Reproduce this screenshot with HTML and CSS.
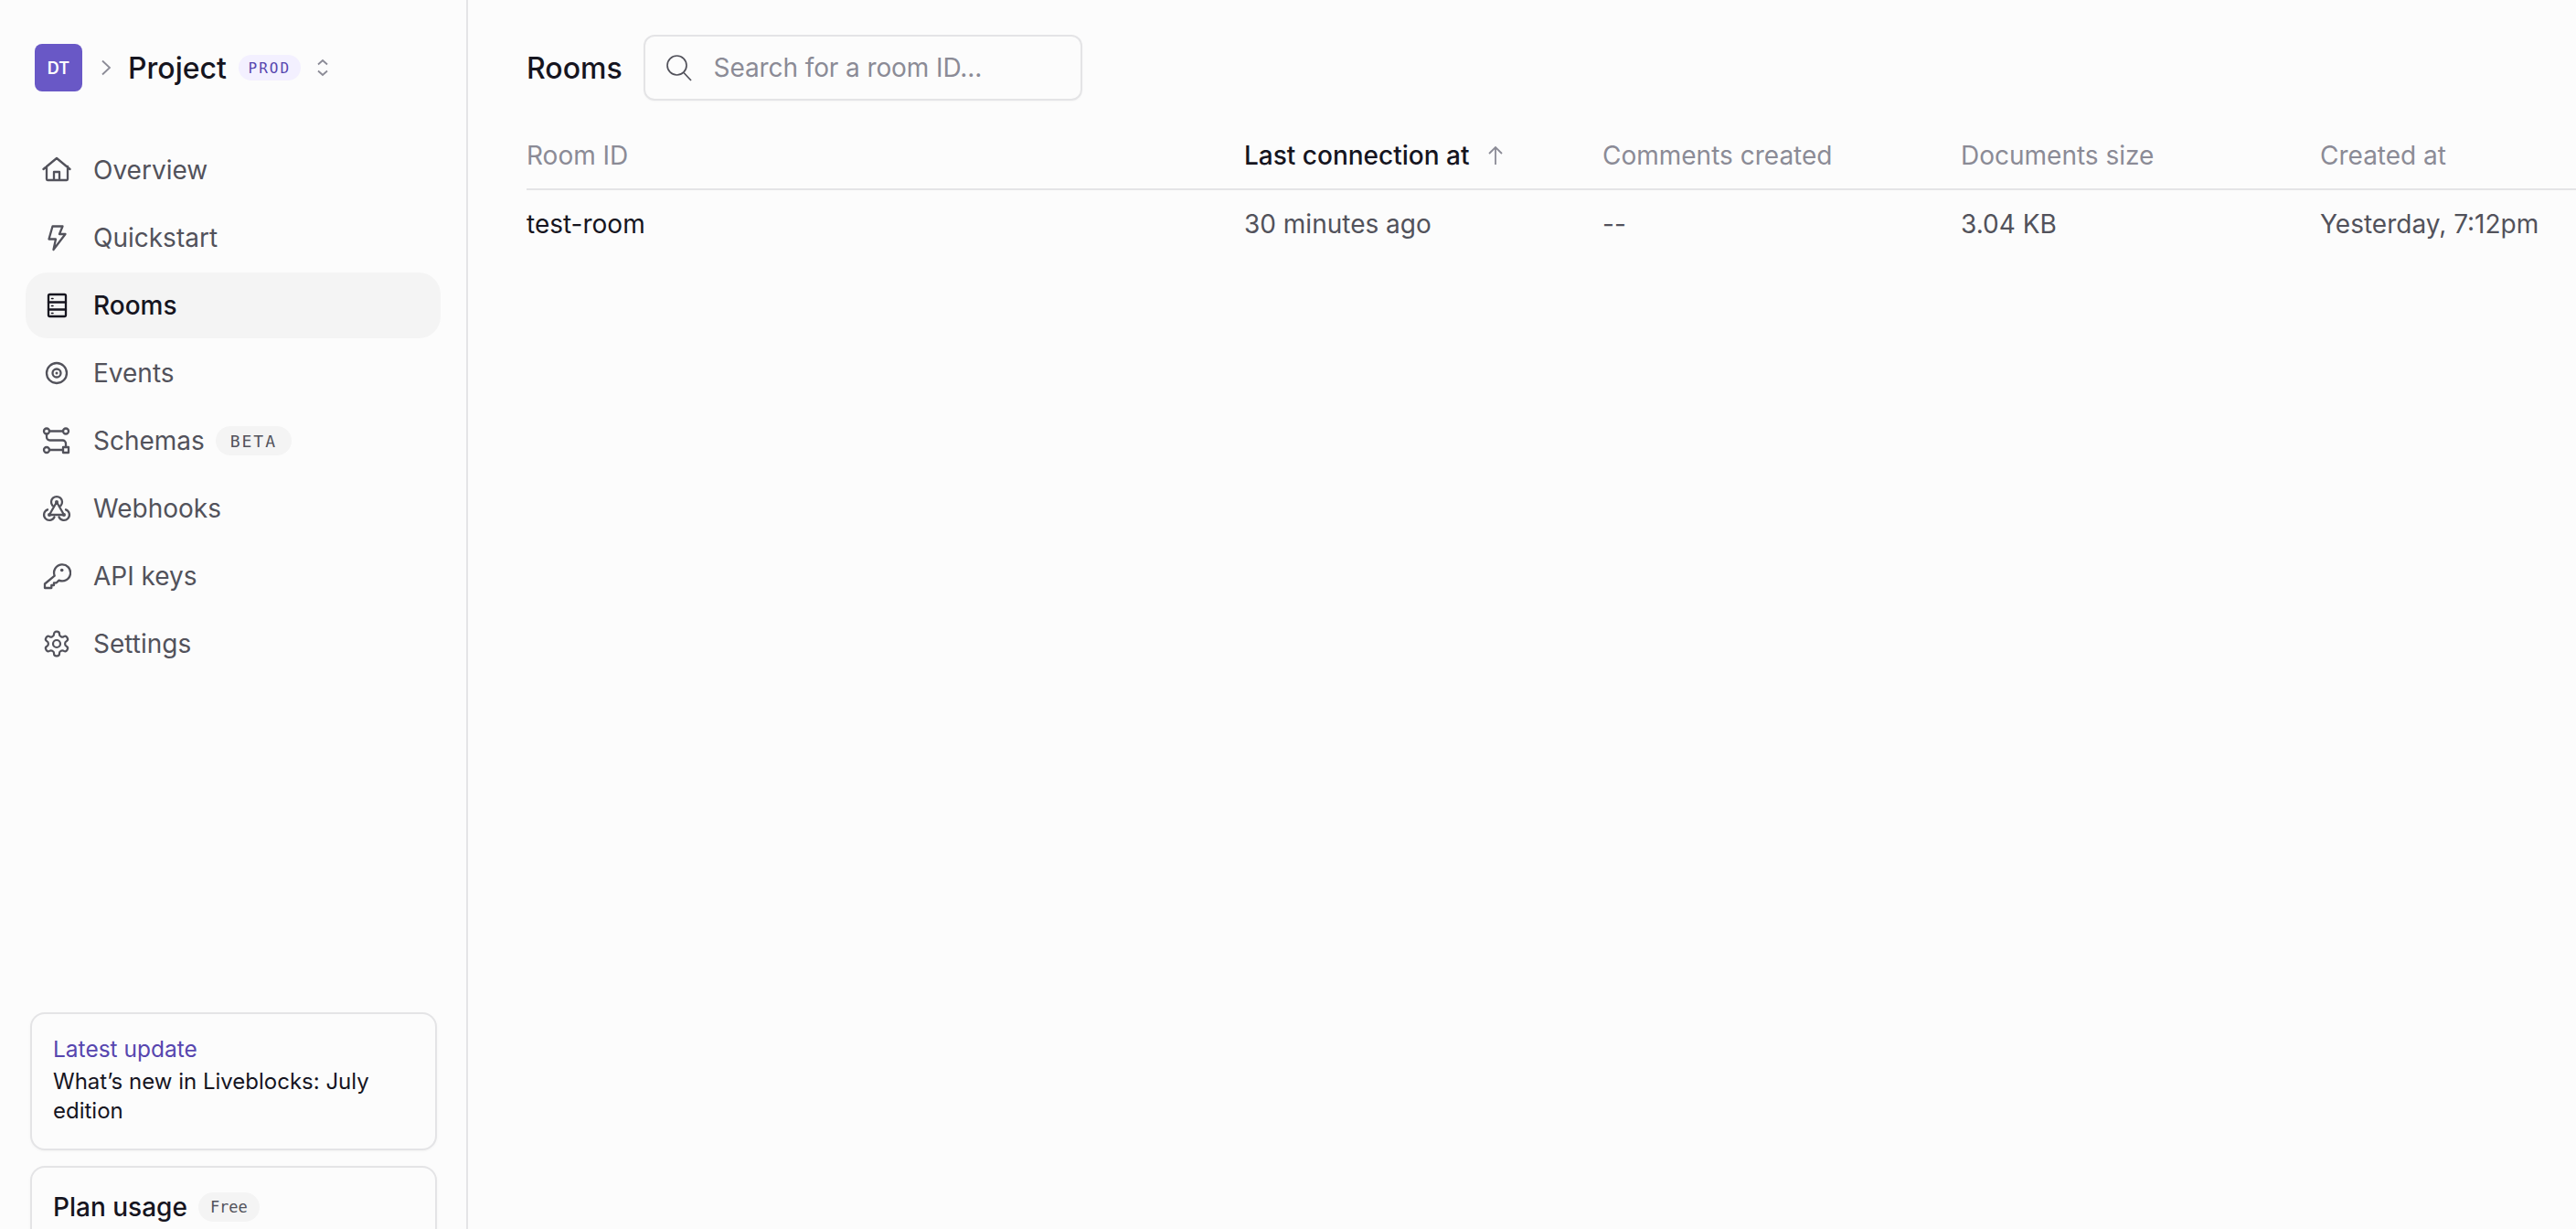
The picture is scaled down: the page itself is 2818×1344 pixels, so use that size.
FILE: index.html
```html
<!DOCTYPE html>
<html lang="en">
<head>
<meta charset="utf-8">
<title>Rooms</title>
<link rel="stylesheet" href="styles.css">
</head>
<body>
<div class="app">
  <aside class="sidebar">
    <div class="project">
      <div class="avatar">DT</div>
      <svg class="chev" viewBox="0 0 12 20"><path d="M2 2.500 10 10 2 17.500"/></svg>
      <span class="project-name">Project</span>
      <span class="pill pill-prod">PROD</span>
      <svg class="updown" viewBox="0 0 14 20"><path d="M2 6.500 7 2l5 4.500M2 13.500 7 18l5-4.500"/></svg>
    </div>
    <nav class="nav">
      <a class="nav-item"><svg class="icon" viewBox="0 0 32 32"><path d="M1.500 15 16 3l14.500 12M5 12v14a1 1 0 0 0 1 1h21a1 1 0 0 0 1-1V12M13 27v-9h6v9"/></svg><span>Overview</span></a>
      <a class="nav-item"><svg class="icon" viewBox="0 0 32 32"><path d="M11.500 3.500h11L19 12h6.500l-13 17L15 17.500H7.500z"/></svg><span>Quickstart</span></a>
      <a class="nav-item is-active"><svg class="icon" viewBox="0 0 32 32"><rect x="7" y="4" width="19" height="24" rx="1.500"/><path d="M7 12.500h19M7 20.500h19"/><path class="dots" d="M10.500 8.500h1.500M10.500 16.500h1.500M10.500 24.500h1.500"/></svg><span>Rooms</span></a>
      <a class="nav-item"><svg class="icon" viewBox="0 0 32 32"><circle cx="16" cy="16" r="11"/><circle cx="16" cy="16" r="4.500"/><circle class="fill" cx="16" cy="16" r="1.500"/></svg><span>Events</span></a>
      <a class="nav-item"><svg class="icon" viewBox="0 0 32 32"><circle cx="5" cy="5.500" r="3"/><circle cx="26" cy="5.500" r="3"/><circle cx="5" cy="26" r="3"/><rect x="23" y="23" width="6" height="6"/><path d="M8 5.500h15M5 8.500V12a3.500 3.500 0 0 0 3.500 3.500h14a3.500 3.500 0 0 1 3.500 3.500v4M8 26h15"/></svg><span>Schemas</span><span class="pill pill-beta">BETA</span></a>
      <a class="nav-item"><svg class="icon" viewBox="0 0 32 32"><path d="M11.500 13A6 6 0 1 1 20.500 13M6 17.300A6 6 0 1 0 13.500 25.500M18.500 25.500A6 6 0 1 0 26 17.300M16 9 8 23H24Z"/><circle class="fill" cx="16" cy="9" r="2"/><circle class="fill" cx="8" cy="23" r="2"/><circle class="fill" cx="24" cy="23" r="2"/></svg><span>Webhooks</span></a>
      <a class="nav-item"><svg class="icon" viewBox="0 0 32 32"><path d="M13.700 15.600A9 9 0 1 1 18.500 20.600L15.800 23.300H13V26H10.300V29H3V24.500z"/><circle class="fill" cx="21.700" cy="9.500" r="1.800"/></svg><span>API keys</span></a>
      <a class="nav-item"><svg class="icon" viewBox="0 0 24 24"><path class="thin" d="M12.220 2h-.44a2 2 0 0 0-2 2v.18a2 2 0 0 1-1 1.730l-.43.250a2 2 0 0 1-2 0l-.15-.08a2 2 0 0 0-2.730.730l-.22.380a2 2 0 0 0 .730 2.730l.15.100a2 2 0 0 1 1 1.720v.510a2 2 0 0 1-1 1.740l-.15.090a2 2 0 0 0-.730 2.730l.22.380a2 2 0 0 0 2.730.730l.15-.08a2 2 0 0 1 2 0l.43.250a2 2 0 0 1 1 1.730V20a2 2 0 0 0 2 2h.44a2 2 0 0 0 2-2v-.18a2 2 0 0 1 1-1.730l.43-.25a2 2 0 0 1 2 0l.15.080a2 2 0 0 0 2.730-.730l.22-.39a2 2 0 0 0-.730-2.730l-.15-.08a2 2 0 0 1-1-1.740v-.5a2 2 0 0 1 1-1.740l.15-.09a2 2 0 0 0 .730-2.730l-.22-.38a2 2 0 0 0-2.730-.730l-.15.080a2 2 0 0 1-2 0l-.43-.25a2 2 0 0 1-1-1.730V4a2 2 0 0 0-2-2z"/><circle class="thin" cx="12" cy="12" r="3"/></svg><span>Settings</span></a>
    </nav>
    <div class="cards">
      <div class="card card-update">
        <div class="card-kicker">Latest update</div>
        <div class="card-title">What’s new in Liveblocks: July edition</div>
      </div>
      <div class="card card-plan">
        <span class="plan-title">Plan usage</span>
        <span class="pill pill-free">Free</span>
      </div>
    </div>
  </aside>
  <main class="main">
    <header class="toolbar">
      <h1 class="page-title">Rooms</h1>
      <label class="search">
        <svg class="search-icon" viewBox="0 0 32 32"><circle cx="13.500" cy="13.500" r="10.500"/><path d="m21 21.500 8 8.500"/></svg>
        <span class="search-placeholder">Search for a room ID...</span>
      </label>
    </header>
    <div class="table">
      <div class="row row-head">
        <div class="cell">Room ID</div>
        <div class="cell cell-sorted">Last connection at<svg class="sort" viewBox="0 0 20 24"><path d="M10 22V3M3 10l7-7 7 7"/></svg></div>
        <div class="cell">Comments created</div>
        <div class="cell">Documents size</div>
        <div class="cell">Created at</div>
      </div>
      <div class="row row-body">
        <div class="cell cell-id">test-room</div>
        <div class="cell">30 minutes ago</div>
        <div class="cell">--</div>
        <div class="cell">3.04 KB</div>
        <div class="cell">Yesterday, 7:12pm</div>
      </div>
    </div>
  </main>
</div>
</body>
</html>
```

FILE: styles.css
```css
* { box-sizing: border-box; }
html, body { margin: 0; height: 100%; }
body {
  background: #fcfcfc;
  color: #16151f;
  font-family: Inter, "Liberation Sans", sans-serif;
  overflow: hidden;
}
.app { display: flex; height: 100vh; overflow: hidden; }

.sidebar {
  flex: none;
  width: 512px;
  height: 100%;
  border-right: 2px solid #e4e4e6;
  padding: 48px 28px 0;
  overflow: hidden;
}
.project { display: flex; align-items: center; height: 52px; padding-left: 10px; }
.avatar {
  width: 52px; height: 52px; border-radius: 8px;
  background: #6958c6; color: #fff;
  display: flex; align-items: center; justify-content: center;
  font-size: 18px; font-weight: 600;
}
.chev { width: 12px; height: 20px; margin-left: 20px; fill: none; stroke: #8b8b96; stroke-width: 1.800; }
.project-name { font-size: 32px; font-weight: 500; margin-left: 18px; }
.pill {
  display: inline-flex; align-items: center; justify-content: center;
  border-radius: 999px;
  font-family: "DejaVu Sans Mono", "Liberation Mono", monospace;
}
.pill-prod {
  width: 68px; height: 28px; margin-left: 13px;
  background: #f3f0ff; color: #5746af;
  font-size: 16px; font-weight: 500; letter-spacing: 2px;
}
.updown { width: 14px; height: 20px; margin-left: 17px; fill: none; stroke: #8b8b96; stroke-width: 1.800; }

.nav { display: flex; flex-direction: column; gap: 2px; margin-top: 50px; }
.nav-item {
  display: flex; align-items: center;
  height: 72px; padding-left: 18px;
  border-radius: 24px;
  color: #52525b;
  font-size: 28px;
}
.nav-item.is-active { background: #f4f4f4; color: #16151f; font-weight: 500; }
.icon {
  flex: none; width: 32px; height: 32px; margin-right: 24px;
  fill: none; stroke: currentColor; stroke-width: 2.300; stroke-linejoin: round; stroke-linecap: round;
}
.icon .thin { stroke-width: 1.650; }
.icon .fill { fill: currentColor; stroke: none; }
.icon .dots { stroke-width: 1.500; }
.pill-beta {
  width: 83px; height: 32px; margin-left: 12px;
  background: #f4f4f4; color: #52525b;
  font-size: 18px; letter-spacing: 2px;
}

.cards { display: flex; flex-direction: column; gap: 17px; margin: 367px 4px 0 5px; }
.card {
  border: 2px solid #e4e4e6;
  border-radius: 16px;
  background: #fcfcfc;
  box-shadow: 0 1px 3px rgba(0,0,0,.04);
  padding: 22px 23px;
}
.card-update { height: 151px; }
.card-kicker { font-size: 24.500px; line-height: 32px; color: #5746af; }
.card-title { font-size: 24px; line-height: 32px; margin-top: 4px; }
.card-plan { height: 120px; padding-top: 27px; display: flex; align-items: flex-start; }
.plan-title { font-size: 28px; font-weight: 500; line-height: 32px; }
.pill-free {
  width: 67px; height: 32px; margin-left: 12px;
  background: #f4f4f4; color: #52525b;
  font-size: 17px;
}

.main { flex: 1; min-width: 0; overflow: hidden; padding: 38px 0 0 64px; }
.toolbar { display: flex; align-items: center; gap: 23px; height: 72px; }
.page-title { margin: 0; font-size: 32px; font-weight: 500; }
.search {
  display: flex; align-items: center;
  width: 480px; height: 72px; padding-left: 21px;
  border: 2px solid #e4e4e6; border-radius: 12px;
  box-shadow: 0 1px 2px rgba(0,0,0,.03);
}
.search-icon { width: 32px; height: 32px; fill: none; stroke: #52525b; stroke-width: 1.700; }
.search-placeholder { margin-left: 22px; font-size: 28px; letter-spacing: -0.1px; color: #8b8b96; }

.table { width: 2354px; margin-top: 24px; }
.row { display: grid; grid-template-columns: 785px 392px 392px 393px 392px; }
.row-head { height: 74px; border-bottom: 2px solid #e4e4e6; color: #8b8b96; font-size: 28px; }
.row-body { height: 74px; color: #52525b; font-size: 28px; }
.cell { display: flex; align-items: center; white-space: nowrap; }
.cell-sorted { color: #16151f; font-weight: 500; }
.cell-id { color: #16151f; }
.sort { width: 20px; height: 24px; margin-left: 19px; fill: none; stroke: #8b8b96; stroke-width: 1.800; }
```
